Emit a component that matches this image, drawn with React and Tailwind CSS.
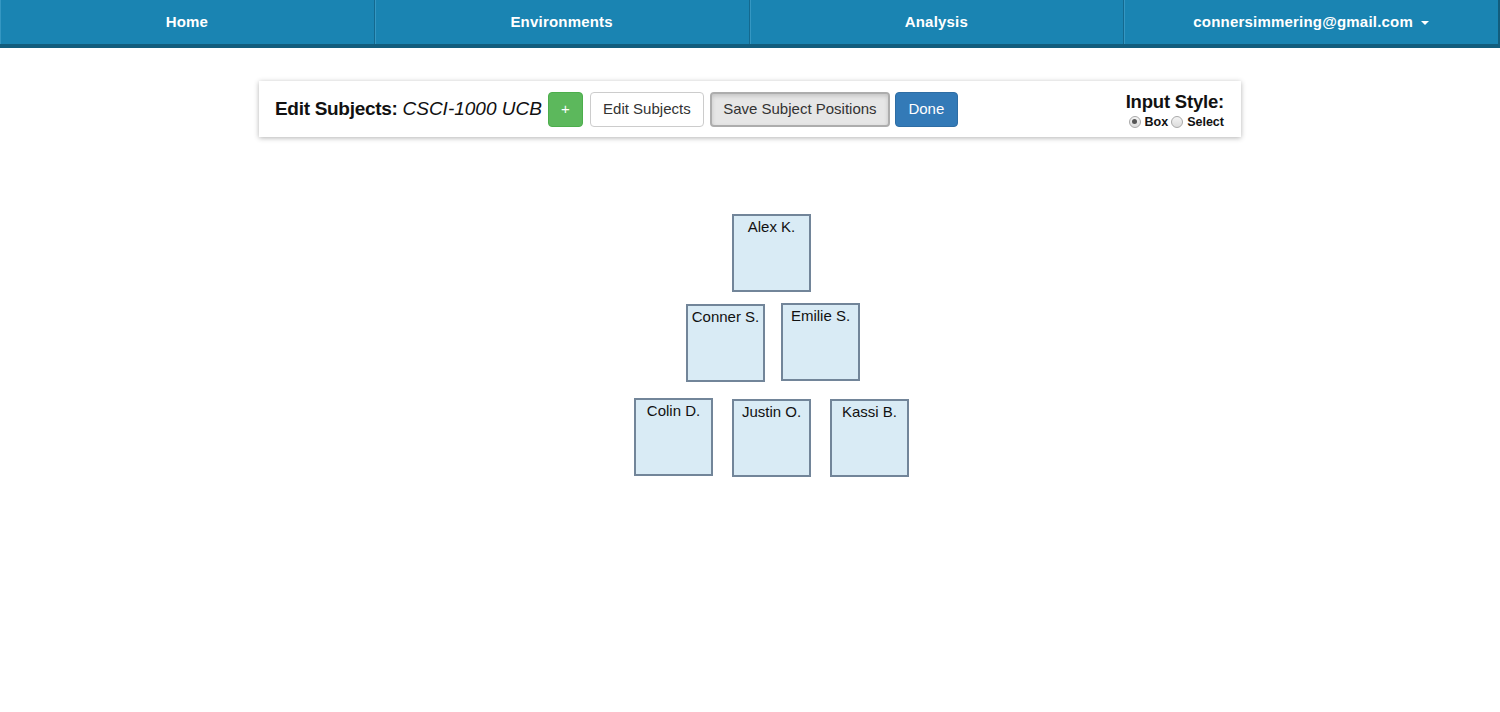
import React, { useState } from "react";

const navItems = ["Home", "Environments", "Analysis"];

const subjects = [
  { id: 1, name: "Alex K.", x: 732, y: 214 },
  { id: 2, name: "Conner S.", x: 686, y: 304 },
  { id: 3, name: "Emilie S.", x: 781, y: 303 },
  { id: 4, name: "Colin D.", x: 634, y: 398 },
  { id: 5, name: "Justin O.", x: 732, y: 399 },
  { id: 6, name: "Kassi B.", x: 830, y: 399 },
];

const NavBar = () => (
  <div className="flex h-12 bg-[#1a84b2] border-b-4 border-b-[#125d7d]">
    {navItems.map((item) => (
      <div
        key={item}
        className="flex-1 flex items-center justify-center border-r border-r-[#14698f] shadow-[inset_1px_0_0_#3597c2] text-white text-[15px] font-semibold tracking-[0.2px]"
      >
        {item}
      </div>
    ))}
    <div className="flex-1 flex items-center justify-center gap-2 border-r-2 border-r-[#125d7d] shadow-[inset_1px_0_0_#3597c2] text-white text-[15px] font-semibold tracking-[0.2px]">
      connersimmering@gmail.com
      <span className="w-0 h-0 border-l-[4px] border-r-[4px] border-t-[4px] border-l-transparent border-r-transparent border-t-white mt-[2px]"></span>
    </div>
  </div>
);

const Toolbar = ({ inputStyle, setInputStyle }) => (
  <div className="mx-auto mt-[33px] w-[982px] h-14 bg-white shadow-[0_1px_5px_rgba(0,0,0,0.3)] flex items-center justify-between pl-4 pr-[17px]">
    <div className="flex items-center">
      <span className="text-[19px] text-[#111] font-semibold tracking-[-0.3px]">Edit Subjects:</span>
      <span className="text-[19px] text-[#111] italic ml-[5px]">CSCI-1000 UCB</span>
      <button className="ml-[6px] w-[35px] h-[35px] rounded-[4px] bg-[#5cb85c] border border-[#4cae4c] text-white text-[15px]">
        +
      </button>
      <button className="ml-[7px] w-[114px] h-[35px] rounded-[4px] bg-white border border-[#cccccc] text-[#333] text-[15px]">
        Edit Subjects
      </button>
      <button className="ml-[6px] w-[180px] h-[35px] rounded-[4px] bg-[#e6e6e6] border-2 border-[#adadad] shadow-[inset_0_2px_4px_rgba(0,0,0,0.15)] text-[#333] text-[15px]">
        Save Subject Positions
      </button>
      <button className="ml-[5px] w-[63px] h-[35px] rounded-[4px] bg-[#337ab7] border border-[#2e6da4] text-white text-[15px] font-medium">
        Done
      </button>
    </div>
    <div className="flex flex-col items-end pt-[2px]">
      <span className="text-[18.5px] leading-[22px] text-[#111] font-semibold tracking-[-0.2px]">Input Style:</span>
      <div className="flex items-center text-[12.5px] font-semibold text-[#111] leading-4 mt-[1px]">
        {["Box", "Select"].map((opt) => (
          <label key={opt} className="flex items-center ml-[3px] cursor-pointer" onClick={() => setInputStyle(opt)}>
            <span className="w-[12px] h-[12px] rounded-full border border-[#a9a9a9] bg-gradient-to-b from-[#f4f4f4] to-[#dcdcdc] flex items-center justify-center mr-[4px]">
              {inputStyle === opt && <span className="w-[5px] h-[5px] rounded-full bg-[#555]"></span>}
            </span>
            {opt}
          </label>
        ))}
      </div>
    </div>
  </div>
);

const App = () => {
  const [inputStyle, setInputStyle] = useState("Box");

  return (
    <div className="w-full min-h-[712px] bg-white font-['Liberation_Sans',Arial,sans-serif]">
      <NavBar />
      <Toolbar inputStyle={inputStyle} setInputStyle={setInputStyle} />
      {/* free canvas: subject boxes sit where they were dragged */}
      <div className="relative w-full h-[500px] -mt-[137px]">
        {subjects.map((s) => (
          <div
            key={s.id}
            className="absolute w-[79px] h-[78px] bg-[#d9ebf5] border-2 border-[#728599] text-center text-[15px] leading-5 text-[#111] pt-[1px]"
            style={{ left: s.x, top: s.y }}
          >
            {s.name}
          </div>
        ))}
      </div>
    </div>
  );
};

export default App;
